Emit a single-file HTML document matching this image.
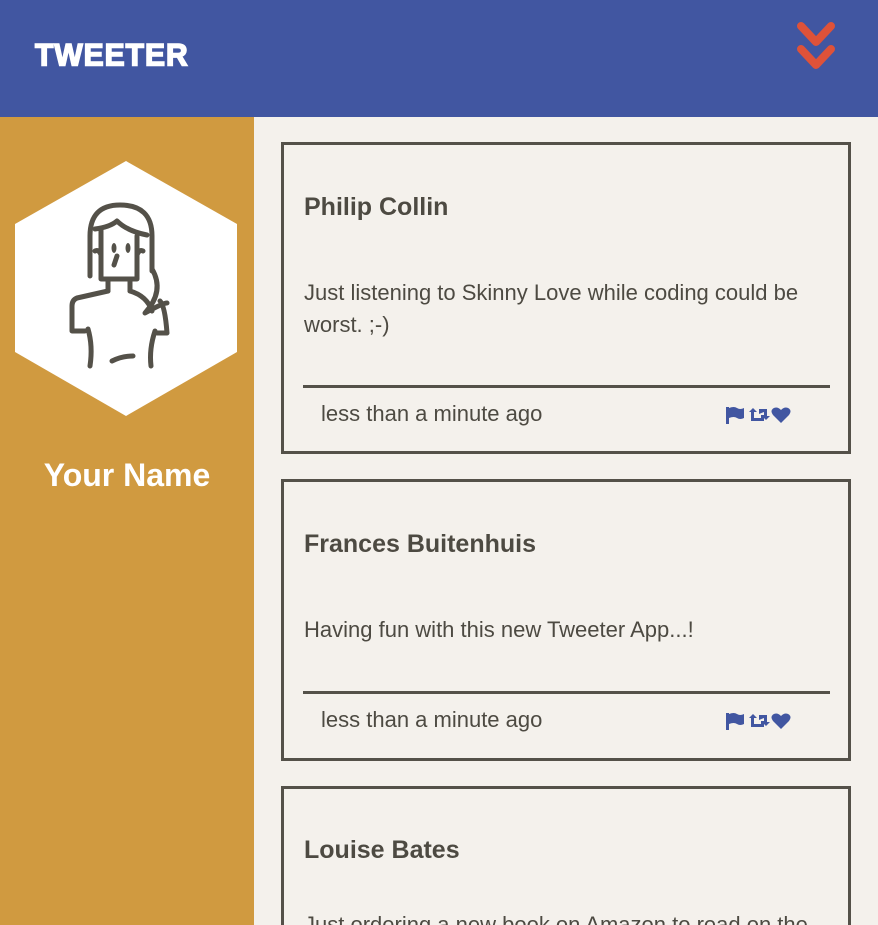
<!DOCTYPE html>
<html style="width:878px;height:925px;overflow:hidden"><head><meta charset="utf-8"><style>
*{margin:0;padding:0;box-sizing:border-box}
body{width:878px;height:925px;overflow:hidden;background:#f4f1ec;font-family:"Liberation Sans",sans-serif;color:#4d4a42;position:relative}
.hdr{position:absolute;left:0;top:0;width:878px;height:117px;background:#4156a1}
.logo{position:absolute;left:35px;top:38px;color:#fff;font-weight:900;font-size:30px;letter-spacing:1px;transform:scale(1.0,1.05);transform-origin:left top;-webkit-text-stroke:1.5px #fff}
.side{position:absolute;left:0;top:117px;width:254px;height:808px;background:#d09a40}
.yn{position:absolute;left:0;width:254px;text-align:center;color:#fff;font-weight:bold;font-size:32px}
.card{position:absolute;left:281px;width:570px;border:3px solid #545149;overflow:hidden}
.name{position:absolute;left:20px;font-weight:bold;font-size:25px}
.txt{position:absolute;left:20px;font-size:22px;line-height:32px;width:530px}
.sep{position:absolute;left:19px;width:527px;height:3px;background:#545149}
.time{position:absolute;left:37px;font-size:22px}
.ic{position:absolute;left:440px}
</style></head><body>
<div class="hdr"><div class="logo">TWEETER</div>
<svg style="position:absolute;left:795px;top:20px" width="44" height="52" viewBox="0 0 44 52"><path d="M6 6 L21 22 L36 6" fill="none" stroke="#de5239" stroke-width="8" stroke-linecap="round" stroke-linejoin="round"/><path d="M6 29 L21 45 L36 29" fill="none" stroke="#de5239" stroke-width="8" stroke-linecap="round" stroke-linejoin="round"/></svg>
</div>
<div class="side">
<svg style="position:absolute;left:15px;top:44px" width="223" height="256" viewBox="0 0 223 256"><polygon points="111,0 222,63 222,191 111,255 0,191 0,63" fill="#fff"/>
<g fill="none" stroke="#545149" stroke-width="5" stroke-linecap="round" stroke-linejoin="round">
<path d="M75 115 L75 75 Q75 44 105 44 Q137 44 137 75 L137 110"/>
<path d="M80 68 Q95 66 102 60 Q112 70 132 74"/>
<path d="M86 68 L86 118 L122 118 L122 75"/>
<path d="M80 90 Q84 88 86 94 M128 90 Q124 88 122 94"/>
<path d="M93 120 L93 130 M115 120 L115 130"/>
<path d="M137 108 Q150 130 130 152 Q148 142 152 142"/>
<path d="M115 130 Q132 135 137 150"/>
<path d="M93 130 L62 137 Q57 139 57 145 L57 170 L70 170"/>
<path d="M145 140 Q150 145 152 172 L142 172"/>
<path d="M73 168 Q78 185 75 205"/>
<path d="M140 170 Q134 188 136 205"/>
<path d="M97 200 Q107 195 118 195"/>
<path d="M102 95 L99 104"/>
</g>
<g fill="#545149"><ellipse cx="99" cy="87" rx="2.5" ry="5"/><ellipse cx="113" cy="87" rx="2.5" ry="5"/></g>
</svg>
<div class="yn" style="top:340px">Your Name</div>
</div>

<div class="card" style="top:142px;height:312px">
<div class="name" style="top:48px">Philip Collin</div>
<div class="txt" style="top:132px">Just listening to Skinny Love while coding could be worst. ;-)</div>
<div class="sep" style="top:240px"></div>
<div class="time" style="top:256px">less than a minute ago</div>
<svg class="ic" style="top:261px" width="70" height="20" viewBox="0 0 70 20"><g fill="#4156a1"><rect x="2" y="1" width="3" height="17"/><path d="M5 2 Q10 0 13 2 Q16 4 20 2 L20 12 Q16 14 13 12 Q10 10 5 12Z"/><path d="M25 6 L29 2 L33 6 H30 V12 H37 V9 H40 V15 H27 V6Z"/><path d="M34 8 V3 H42 V10 H45 L41 14 L37 10 H39 V6Z" transform="translate(1,0)"/><path d="M57 17 L49 9 Q46 5 49 2.5 Q53 0 57 4 Q61 0 65 2.5 Q68 5 65 9Z"/></g></svg>
</div>

<div class="card" style="top:479px;height:282px">
<div class="name" style="top:48px">Frances Buitenhuis</div>
<div class="txt" style="top:132px">Having fun with this new Tweeter App...!</div>
<div class="sep" style="top:209px"></div>
<div class="time" style="top:225px">less than a minute ago</div>
<svg class="ic" style="top:230px" width="70" height="20" viewBox="0 0 70 20"><g fill="#4156a1"><rect x="2" y="1" width="3" height="17"/><path d="M5 2 Q10 0 13 2 Q16 4 20 2 L20 12 Q16 14 13 12 Q10 10 5 12Z"/><path d="M25 6 L29 2 L33 6 H30 V12 H37 V9 H40 V15 H27 V6Z"/><path d="M34 8 V3 H42 V10 H45 L41 14 L37 10 H39 V6Z" transform="translate(1,0)"/><path d="M57 17 L49 9 Q46 5 49 2.5 Q53 0 57 4 Q61 0 65 2.5 Q68 5 65 9Z"/></g></svg>
</div>

<div class="card" style="top:786px;height:139px;border-bottom:none">
<div class="name" style="top:47px">Louise Bates</div>
<div class="txt" style="top:120px;white-space:nowrap">Just ordering a new book on Amazon to read on the</div>
</div>
</body></html>
